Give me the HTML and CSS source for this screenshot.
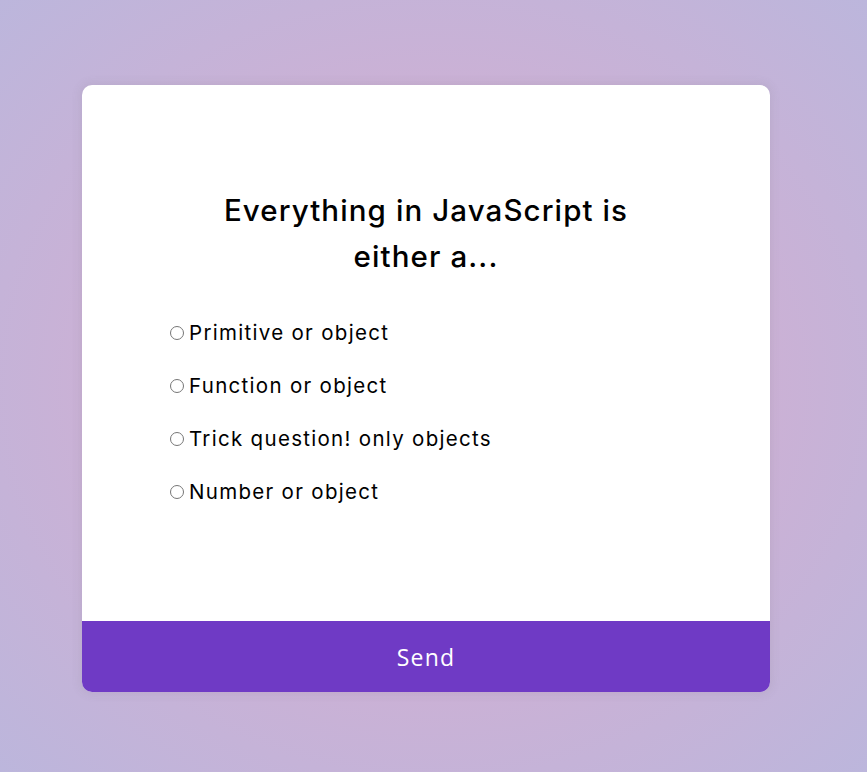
FILE: index.html
```html
<!DOCTYPE html>
<html lang="en">
<head>
<meta charset="UTF-8">
<title>Quiz</title>
<link rel="stylesheet" href="styles.css">
</head>
<body>
<div class="page">
  <div class="quiz">
    <div class="quiz-header">
      <h2 class="question">Everything in JavaScript is<br>either a...</h2>
      <ul class="answers">
        <li class="answer"><input type="radio" name="answer" id="a" class="radio"><label for="a">Primitive or object</label></li>
        <li class="answer"><input type="radio" name="answer" id="b" class="radio"><label for="b">Function or object</label></li>
        <li class="answer"><input type="radio" name="answer" id="c" class="radio"><label for="c">Trick question! only objects</label></li>
        <li class="answer"><input type="radio" name="answer" id="d" class="radio"><label for="d">Number or object</label></li>
      </ul>
    </div>
    <button class="send">Send</button>
  </div>
</div>
</body>
</html>
```
FILE: styles.css
```css
html, body {
  margin: 0;
  padding: 0;
  height: 100%;
}
body {
  background: radial-gradient(ellipse at 50% 50%, #d5aed1 0%, #ceb0d4 45%, #bcb6dc 100%);
  font-family: Inter, "Open Sans", sans-serif;
}
.page {
  padding: 85px 0 0 82px;
  box-sizing: border-box;
  height: 100%;
}
.quiz {
  width: 688px;
  background: #fff;
  border-radius: 10px;
  overflow: hidden;
  box-shadow: 0 0 10px 2px rgba(100, 100, 100, 0.1);
}
.quiz-header {
  padding: 102px 64px 114px 64px;
  height: 536px;
  box-sizing: border-box;
}
.question {
  margin: 0;
  text-align: center;
  font-size: 29.5px;
  font-weight: 500;
  line-height: 46px;
  letter-spacing: 1.1px;
  color: #000;
}
.answers {
  list-style: none;
  margin: 39px 0 0 0;
  padding: 0 0 0 24px;
  display: flex;
  flex-direction: column;
  gap: 23px;
}
.answer {
  display: flex;
  align-items: center;
  font-size: 20.5px;
  line-height: 30px;
  letter-spacing: 1.3px;
  color: #000;
}
.radio {
  margin: 0 5px 0 0;
  width: 14px;
  height: 14px;
}
.send {
  display: block;
  width: 100%;
  height: 71px;
  border: none;
  background: #6f3ac5;
  color: #fff;
  font-family: "Open Sans", sans-serif;
  font-size: 23px;
  letter-spacing: 1.2px;
  cursor: pointer;
  padding: 0;
}
```
